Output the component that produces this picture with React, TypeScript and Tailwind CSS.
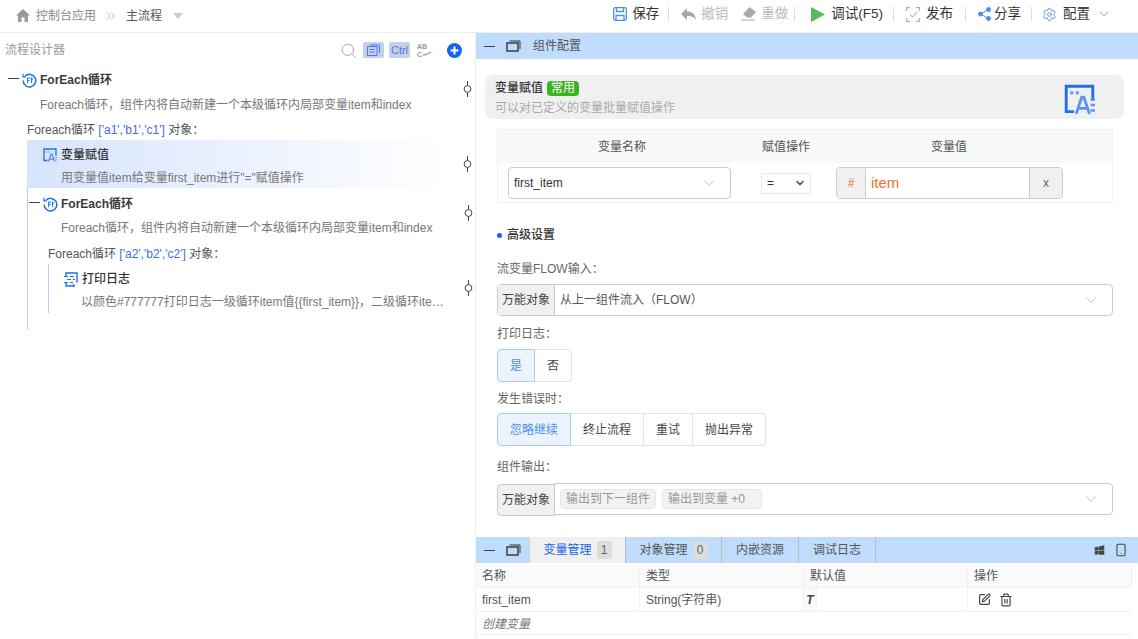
import {
  ChevronDown,
  ChevronsRight,
  Search,
  Settings,
  Smartphone,
  SquarePen,
  Trash2,
} from "lucide-react";
import { FaWindows } from "react-icons/fa";
import type { ReactNode } from "react";

function Collapse() {
  return <span className="w-[11px] h-px bg-[#444] inline-block shrink-0" />;
}

function WindowIcon() {
  return (
    <svg width="15" height="12" viewBox="0 0 15 12" fill="none" stroke="#333" className="shrink-0">
      <rect x="1" y="3" width="11" height="8" strokeWidth="1.4" />
      <path d="M3.5 1h10.5v8" strokeWidth="1" />
    </svg>
  );
}

function LoopIcon({ className = "" }: { className?: string }) {
  return (
    <svg width="15" height="15" viewBox="0 0 15 15" fill="none" stroke="#1a73e8" className={className}>
      <path d="M3.2 3A6.3 6.3 0 1 1 1.2 7.5" strokeWidth="1.5" />
      <path d="M1 0.8v3h3" strokeWidth="1.2" />
      <path d="M5 5.2h3M5.6 5.2v5M5.6 7.6h2M9.6 4.5v5.6M8.6 6h2.4" strokeWidth="1" />
    </svg>
  );
}

function AssignIcon({ size = 14 }: { size?: number }) {
  return (
    <svg width={size} height={size} viewBox="0 0 28 28" fill="none" className="shrink-0">
      <path d="M9 25H2V2h24v13" stroke="#1d6ff2" strokeWidth="2.6" />
      <circle cx="7" cy="8" r="1.6" fill="#6a9ef5" />
      <circle cx="12" cy="8" r="1.6" fill="#6a9ef5" />
      <path d="M11 27l5-15h2l5 15M13 22h8" stroke="#5b93f2" strokeWidth="2.6" />
      <path d="M24 14h4M24 19h4M24 24h4" stroke="#5b93f2" strokeWidth="2.2" />
    </svg>
  );
}

function LogIcon() {
  return (
    <svg width="15" height="15" viewBox="0 0 15 15" fill="none" stroke="#1a73e8" strokeWidth="1.4" className="shrink-0">
      <path d="M3 4.5V1h11v9.5M11 14H3v-3" />
      <path d="M1 4.5h4M7 4.5h4M4 7.5h4M10 7.5h2M1 10.5h4M7 10.5h3" strokeWidth="1.2" />
      <path d="M10 12l2 2-2 1" strokeWidth="1" />
    </svg>
  );
}

function Connector() {
  return (
    <svg width="9" height="16" viewBox="0 0 9 16" fill="none" stroke="#444" className="absolute left-[463px]">
      <path d="M4.5 0v4.5M4.5 11.5V16" />
      <circle cx="4.5" cy="8" r="3.4" />
    </svg>
  );
}

function Sep() {
  return <span className="block w-px h-[14px] bg-[#ddd] shrink-0" />;
}

function ToolItem({ icon, label, muted, gap = "gap-[5px]" }: { icon: ReactNode; label: string; muted?: boolean; gap?: string }) {
  return (
    <span className={`flex items-center ${gap} ${muted ? "text-[#bbb]" : "text-[#333]"}`}>
      {icon}
      <span>{label}</span>
    </span>
  );
}

function Toolbar() {
  return (
    <div className="flex items-center text-[13.5px] -mt-[4px]">
      <ToolItem
        label="保存"
        icon={
          <svg width="14" height="14" viewBox="0 0 14 14" fill="none" stroke="#4a90e8" strokeWidth="1.3">
            <rect x="0.7" y="0.7" width="12.6" height="12.6" rx="1.5" />
            <path d="M3.5 1v3.5h7V1M3 13V8.5h8V13" />
          </svg>
        }
      />
      <span className="ml-[9px] mr-[12px]"><Sep /></span>
      <ToolItem
        muted
        label="撤销"
        icon={
          <svg width="15" height="13" viewBox="0 0 15 13" fill="#a8a8a8">
            <path d="M6 0v3.5c5 0 8.5 2.5 9 9-1.5-3.5-4.5-4.5-9-4.5V12L0 6z" />
          </svg>
        }
      />
      <span className="ml-[13px]" />
      <ToolItem
        muted
        label="重做"
        icon={
          <svg width="15" height="14" viewBox="0 0 15 14" fill="#a8a8a8">
            <path d="M8.5 0L15 5 10 10.5H6L2 7z" />
            <path d="M0 12.5h14v1H0z" />
          </svg>
        }
      />
      <span className="ml-[6px] mr-[16px]"><Sep /></span>
      <ToolItem
        label="调试(F5)"
        gap="gap-[6px]"
        icon={
          <svg width="14" height="15" viewBox="0 0 14 15" fill="#5cb85c">
            <path d="M0 0l14 7.5L0 15z" />
          </svg>
        }
      />
      <span className="ml-[10px] mr-[12px]"><Sep /></span>
      <ToolItem
        label="发布"
        gap="gap-[6px]"
        icon={
          <svg width="14" height="15" viewBox="0 0 14 15" fill="none" stroke="#8fb6f5" strokeWidth="1.2">
            <path d="M0.6 4V0.6H4M10 0.6h3.4V4M13.4 11v3.4H10M4 14.4H0.6V11" />
            <path d="M4 7.5l2.5 2.5L11 5" stroke="#b9c4d6" />
          </svg>
        }
      />
      <span className="ml-[12px] mr-[12px]"><Sep /></span>
      <ToolItem
        label="分享"
        gap="gap-[3px]"
        icon={
          <svg width="13" height="14" viewBox="0 0 13 14" fill="#4a90e8" stroke="#4a90e8">
            <circle cx="2.5" cy="7" r="2" />
            <circle cx="10.5" cy="2.5" r="2" />
            <circle cx="10.5" cy="11.5" r="2" />
            <path d="M2.5 7l8-4.5M2.5 7l8 4.5" fill="none" />
          </svg>
        }
      />
      <span className="ml-[10px] mr-[10px]"><Sep /></span>
      <ToolItem label="配置" gap="gap-[6px]" icon={<Settings size={15} strokeWidth={1.5} color="#4a90e8" />} />
      <ChevronDown size={14} strokeWidth={1.2} color="#666" className="ml-[7px]" />
    </div>
  );
}

function Desc({ text, className = "" }: { text: string; className?: string }) {
  return <div className={`text-[#777] truncate ${className}`}>{text}</div>;
}

function Tree() {
  return (
    <div className="relative flex-1 text-[12px]">
      {/* 外层循环 */}
      <div className="pl-[8px] pt-[1px]">
        <div className="flex items-center h-[24px] relative">
          <span className="flex -translate-y-[2px]"><Collapse /></span>
          <LoopIcon className="ml-[3px] mr-[3px] shrink-0" />
          <span className="text-[#3a3a3a] font-bold">ForEach循环</span>
          <div className="absolute top-[13px] left-[-8px]"><Connector /></div>
        </div>
        <Desc text="Foreach循环，组件内将自动新建一个本级循环内局部变量item和index" className="pl-[32px] h-[24px] leading-[26px]" />
        <div className="pl-[19px] h-[24px] leading-[28px] text-[#555]">
          Foreach循环 <span className="text-[#3b6cf0]">['a1','b1','c1']</span> 对象：
        </div>
      </div>

      <div className="ml-[27px] border-l border-[#b4cdf6] pb-[17px]">
        <div className="relative h-[48px] w-[421px] bg-gradient-to-r from-[#d6e4fd] to-white pl-[16px] -ml-px">
          <div className="flex items-center gap-[4px] h-[28px] pt-[1px]">
            <AssignIcon />
            <span className="text-[#333] font-medium">变量赋值</span>
          </div>
          <Desc text={'用变量值item给变量first_item进行"="赋值操作'} className="pl-[18px] h-[20px] leading-[20px]" />
          <div className="absolute top-[16px] left-[-27px]"><Connector /></div>
        </div>

        <div className="flex items-center h-[30px] pt-[2px] relative">
          <span className="ml-[1px] flex -translate-y-[2px]"><Collapse /></span>
          <LoopIcon className="ml-[3px] mr-[3px] shrink-0" />
          <span className="text-[#3a3a3a] font-bold">ForEach循环</span>
          <div className="absolute top-[17px] left-[-27px]"><Connector /></div>
        </div>
        <Desc text="Foreach循环，组件内将自动新建一个本级循环内局部变量item和index" className="pl-[33px] h-[24px] leading-[20px]" />
        <div className="pl-[20px] h-[22px] leading-[25px] text-[#555]">
          Foreach循环 <span className="text-[#3b6cf0]">['a2','b2','c2']</span> 对象：
        </div>
        <div className="relative ml-[20px] border-l border-[#b4cdf6] h-[49px] w-[399px] pl-[14px]">
          <div className="flex items-center gap-[4px] h-[28px] pt-[2px]">
            <LogIcon />
            <span className="text-[#333] font-medium">打印日志</span>
          </div>
          <Desc text="以颜色#777777打印日志一级循环item值{{first_item}}，二级循环item值{{second_item}}" className="pl-[18px] h-[20px] leading-[20px]" />
          <div className="absolute top-[16px] left-[-48px]"><Connector /></div>
        </div>
      </div>
    </div>
  );
}

function LeftPanel() {
  return (
    <div className="w-[476px] shrink-0 border-r border-[#eee] flex flex-col">
      <div className="flex items-center h-[34px] pl-[5px] text-[12px] text-[#999]">
        <span>流程设计器</span>
        <div className="ml-auto flex items-center pr-[13px]">
          <Search size={17} strokeWidth={1.2} color="#999" className="mr-[6px]" />
          <span className="w-[21px] h-[16px] bg-[#c5d0e6] rounded-[2px] flex items-center justify-center mr-[5px]">
            <svg width="13" height="12" viewBox="0 0 13 12" fill="none" stroke="#4a7bf0">
              <rect x="0.5" y="2.5" width="9.5" height="9" />
              <path d="M3 1h9.5v8M2.5 5.5h5M2.5 8h5" />
            </svg>
          </span>
          <span className="w-[21px] h-[16px] bg-[#c5d0e6] rounded-[2px] text-[11px] leading-[16px] text-center text-[#4a7bf0] mr-[7px]">Ctrl</span>
          <svg width="15" height="17" viewBox="0 0 15 17" fill="none" className="mr-[15px]">
            <text x="0" y="7" fontSize="7" fontWeight="700" fill="#999" fontFamily="Liberation Sans">AB</text>
            <text x="0" y="15" fontSize="7" fontWeight="700" fill="#999" fontFamily="Liberation Sans">C</text>
            <path d="M6 13c3 0 5-1 8-3" stroke="#999" strokeWidth="1.4" />
          </svg>
          <span className="w-[15px] h-[15px] rounded-full bg-[#1463f3] flex items-center justify-center">
            <svg width="9" height="9" viewBox="0 0 9 9" stroke="white" strokeWidth="2"><path d="M4.5 0.5v8M0.5 4.5h8" /></svg>
          </span>
        </div>
      </div>
      <Tree />
    </div>
  );
}

function ArrowDown() {
  return <ChevronDown size={18} strokeWidth={1} color="#aaa" className="shrink-0" />;
}

function Label({ children, className = "" }: { children: ReactNode; className?: string }) {
  return <div className={`text-[#666] ${className}`}>{children}</div>;
}

function Segments({ items }: { items: { label: string; width: string }[] }) {
  return (
    <div className="flex h-[33px] w-fit">
      {items.map((it, i) => (
        <span
          key={it.label}
          className={`${it.width} flex items-center justify-center border-y border-r ${
            i === 0
              ? "bg-[#ecf3fe] text-[#4a90f0] border-l border-[#a3cdfb] rounded-l-[4px]"
              : "text-[#444] border-[#dfe3ec]"
          } ${i === items.length - 1 ? "rounded-r-[4px]" : ""}`}
        >
          {it.label}
        </span>
      ))}
    </div>
  );
}

function ConfigPanel() {
  return (
    <div className="flex-1 min-h-0 text-[12px]">
      <div className="h-[26px] bg-[#c0dcfc] flex items-center pl-[8px] gap-[11px] text-[#555]">
        <Collapse />
        <WindowIcon />
        <span className="ml-[1px]">组件配置</span>
      </div>

      <div className="mt-[16px] ml-[9px] mr-[14px] h-[44px] bg-[#f0f0f0] rounded-[8px] flex items-center pl-[10px] pr-[29px]">
        <div>
          <div className="flex items-center gap-[4px] h-[20px]">
            <span className="text-[#333] font-medium">变量赋值</span>
            <span className="bg-[#38b520] text-white rounded-[4px] px-[4px] h-[15px] leading-[15px]">常用</span>
          </div>
          <div className="text-[#aaa] h-[18px] leading-[20px]">可以对已定义的变量批量赋值操作</div>
        </div>
        <span className="ml-auto mt-[4px]"><AssignIcon size={31} /></span>
      </div>

      <div className="mt-[10px] ml-[21px] mr-[25px] border border-[#edf0f5] h-[74px]">
        <div className="grid grid-cols-[248px_80px_246px] h-[33px] bg-[#f8f9f9] text-[#555] items-center text-center">
          <span>变量名称</span>
          <span>赋值操作</span>
          <span>变量值</span>
        </div>
        <div className="flex items-center pl-[10px] pt-[4px]">
          <div className="w-[223px] h-[32px] border border-[#ccc] rounded-[4px] flex items-center pl-[5px] pr-[12px] justify-between text-[#333]">
            <span>first_item</span>
            <ArrowDown />
          </div>
          <div className="ml-[30px] w-[50px] h-[21px] border border-[#e8e8e8] flex items-center pl-[5px] pr-[4px] justify-between text-[#333]">
            <span>=</span>
            <ChevronDown size={12} strokeWidth={3} color="#444" />
          </div>
          <div className="ml-[25px] w-[227px] h-[32px] border border-[#ccc] rounded-[4px] flex overflow-hidden">
            <span className="w-[29px] bg-[#f0f0f0] border-r border-[#ccc] text-[#e8762c] flex items-center justify-center">#</span>
            <span className="flex-1 pl-[5px] text-[15px] text-[#e8762c] flex items-center">item</span>
            <span className="w-[33px] bg-[#f0f0f0] border-l border-[#ccc] text-[#666] flex items-center justify-center">x</span>
          </div>
        </div>
      </div>

      <div className="ml-[21px] mr-[25px]">
        <div className="flex items-center gap-[5px] h-[20px] mt-[22px] text-[#333] font-medium">
          <span className="w-[5px] h-[5px] rounded-full bg-[#1463f3]" />
          高级设置
        </div>
        <Label className="mt-[14px] h-[20px] leading-[20px]">流变量FLOW输入：</Label>
        <div className="mt-[5px] h-[32px] border border-[#ccc] rounded-[4px] flex items-center overflow-hidden">
          <span className="w-[57px] h-full bg-[#f0f0f0] border-r border-[#ccc] text-[#444] flex items-center justify-center">万能对象</span>
          <span className="pl-[5px] text-[#555]">从上一组件流入（FLOW）</span>
          <span className="ml-auto pr-[12px]"><ArrowDown /></span>
        </div>
        <Label className="mt-[8px] h-[20px] leading-[20px]">打印日志：</Label>
        <div className="mt-[5px]">
          <Segments items={[{ label: "是", width: "w-[38px]" }, { label: "否", width: "w-[37px]" }]} />
        </div>
        <Label className="mt-[7px] h-[20px] leading-[20px]">发生错误时：</Label>
        <div className="mt-[4px]">
          <Segments
            items={[
              { label: "忽略继续", width: "w-[74px]" },
              { label: "终止流程", width: "w-[73px]" },
              { label: "重试", width: "w-[49px]" },
              { label: "抛出异常", width: "w-[73px]" },
            ]}
          />
        </div>
        <Label className="mt-[11px] h-[20px] leading-[20px]">组件输出：</Label>
        <div className="mt-[6px] flex">
          <span className="w-[58px] h-[32px] mt-px bg-[#f0f0f0] border border-[#ccc] rounded-l-[4px] text-[#444] flex items-center justify-center">万能对象</span>
          <div className="flex-1 h-[32px] -ml-px border border-[#ccc] rounded-r-[4px] flex items-center pl-[5px] gap-[6px] text-[#999]">
            <span className="h-[20px] leading-[18px] px-[5px] bg-[#f2f2f2] border border-[#e6e6e6] rounded-[4px]">输出到下一组件</span>
            <span className="h-[20px] leading-[18px] pl-[5px] w-[100px] bg-[#f2f2f2] border border-[#e6e6e6] rounded-[4px]">输出到变量 +0</span>
            <span className="ml-auto pr-[12px]"><ArrowDown /></span>
          </div>
        </div>
      </div>
    </div>
  );
}

function Tab({ label, count, active, width }: { label: string; count?: number; active?: boolean; width: string }) {
  return (
    <div className={`${width} h-full flex items-center justify-center gap-[5px] border-r border-[#bbb] ${active ? "bg-[#f0f0f0] text-[#1463f3]" : "text-[#555]"}`}>
      <span>{label}</span>
      {count !== undefined && (
        <span className="w-[15px] h-[18px] rounded-[3px] bg-[#ddd] text-[#666] text-center leading-[18px]">{count}</span>
      )}
    </div>
  );
}

function BottomPanel() {
  const cell = "px-[6px] flex items-center border-r border-[#f0f2f2]";
  return (
    <div className="h-[102px] text-[12px]">
      <div className="h-[26px] bg-[#c0dcfc] flex items-center">
        <div className="w-[54px] flex items-center pl-[8px] gap-[11px]">
          <Collapse />
          <WindowIcon />
        </div>
        <Tab label="变量管理" count={1} active width="w-[96px]" />
        <Tab label="对象管理" count={0} width="w-[96px]" />
        <Tab label="内嵌资源" width="w-[77px]" />
        <Tab label="调试日志" width="w-[77px]" />
        <div className="ml-auto flex items-center gap-[9px] pr-[10px]">
          <FaWindows size={11} color="#444" className="-skew-y-6" />
          <Smartphone size={14} strokeWidth={1.8} color="#444" />
        </div>
      </div>
      <div className="mt-[2px] mr-[6px] text-[#555]">
        <div className="grid grid-cols-[164px_164px_164px_1fr] h-[23px] bg-[#f9fafa] border-b border-[#f0f2f2]">
          <span className={cell}>名称</span>
          <span className={cell}>类型</span>
          <span className={cell}>默认值</span>
          <span className={cell}>操作</span>
        </div>
        <div className="grid grid-cols-[164px_164px_164px_1fr] h-[24px] border-b border-[#f0f2f2]">
          <span className={cell}>first_item</span>
          <span className={cell}>String(字符串)</span>
          <span className="flex items-center border-r border-[#f0f2f2]">
            <span className="w-[13px] h-full bg-[#f9fafa] border-r border-[#f0f2f2] flex items-center justify-center font-bold italic text-[#444]">T</span>
          </span>
          <span className="pl-[10px] flex items-center gap-[8px]">
            <SquarePen size={13} strokeWidth={2.2} color="#444" />
            <Trash2 size={14} strokeWidth={2} color="#444" />
          </span>
        </div>
        <div className="h-[23px] leading-[25px] pl-[6px] italic text-[#777] border-b border-[#f0f2f2]">创建变量</div>
      </div>
    </div>
  );
}

export default function App() {
  return (
    <div className="w-[1138px] h-[639px] overflow-hidden bg-white flex flex-col font-['Liberation_Sans','Noto_Sans_CJK_SC',sans-serif]">
      <header className="h-[33px] shrink-0 border-b border-[#eee] flex items-center pl-[16px] pr-[27px]">
        <div className="flex items-center text-[12px] -mt-px">
          <svg width="14" height="13" viewBox="0 0 14 13" fill="#9a9a9a">
            <path d="M7 0L0 6.5h2V13h3.5V8.5h3V13H12V6.5h2z" />
          </svg>
          <span className="ml-[6px] text-[#888]">控制台应用</span>
          <ChevronsRight size={14} strokeWidth={1} color="#777" className="ml-[8px]" />
          <span className="ml-[8px] text-[#555]">主流程</span>
          <span className="ml-[11px] w-0 h-0 border-x-[5px] border-x-transparent border-t-[6px] border-t-[#ccc]" />
        </div>
        <div className="ml-auto"><Toolbar /></div>
      </header>
      <main className="flex-1 flex min-h-0">
        <LeftPanel />
        <div className="flex-1 flex flex-col min-w-0">
          <ConfigPanel />
          <BottomPanel />
        </div>
      </main>
    </div>
  );
}
